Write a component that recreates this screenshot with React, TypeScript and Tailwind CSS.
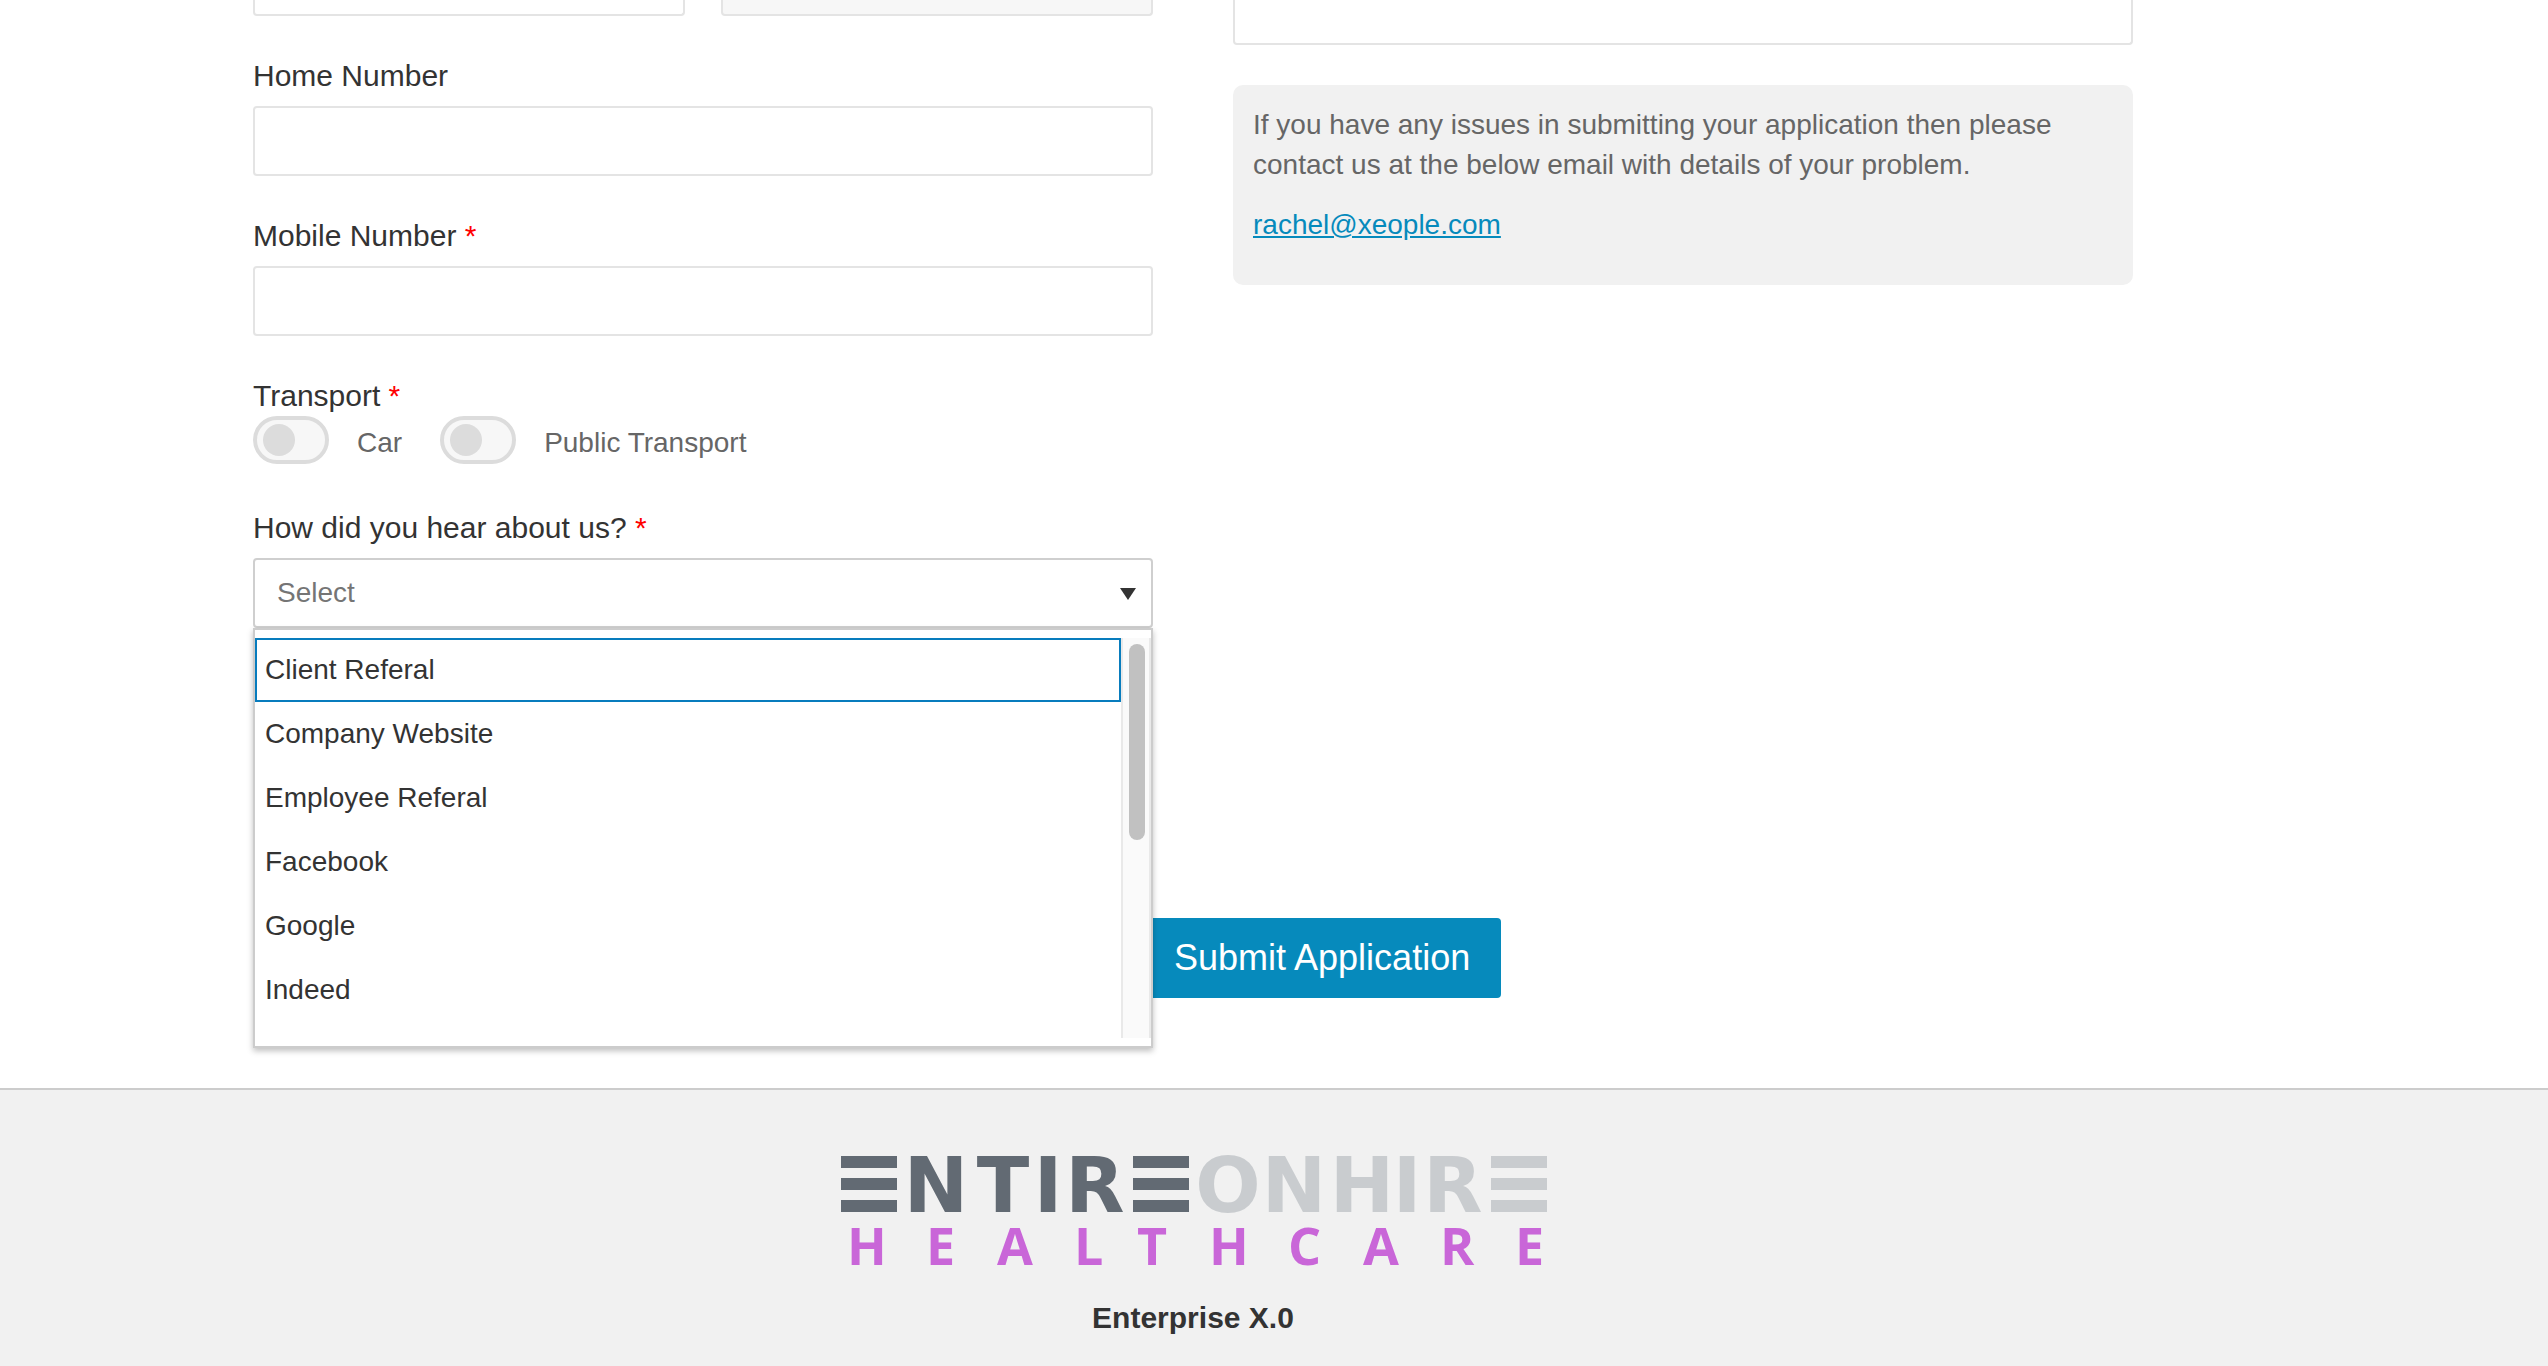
import React from 'react';

const FIELD = 'block w-full rounded border-2 border-[#e4e4e4] bg-white px-5 text-[28px] outline-none';

const SOURCES = ['Client Referal', 'Company Website', 'Employee Referal', 'Facebook', 'Google', 'Indeed'];

function FieldLabel({ htmlFor, required, children }: { htmlFor: string; required?: boolean; children: React.ReactNode }) {
  return (
    <label htmlFor={htmlFor} className="block text-[30px] leading-10 text-[#333]">
      {children}
      {required && <span className="text-[#f00]"> *</span>}
    </label>
  );
}

function Toggle({ id, label }: { id: string; label: string }) {
  return (
    <div className="flex items-start gap-7">
      <span className="relative block h-12 w-[76px]">
        <input
          id={id}
          type="checkbox"
          className="peer block h-12 w-[76px] appearance-none rounded-full border-4 border-[#dcdcdc] bg-[#f7f7f7] checked:bg-[#068abc]"
        />
        <span className="pointer-events-none absolute left-2.5 top-2 size-8 rounded-full bg-[#dcdcdc] peer-checked:left-8.5" />
      </span>
      <label htmlFor={id} className="text-[28px] leading-[54px] text-[#666]">
        {label}
      </label>
    </div>
  );
}

function BarLetter({ x }: { x: number }) {
  return (
    <>
      <rect x={x} y="0" width="56" height="12" />
      <rect x={x} y="22" width="56" height="12" />
      <rect x={x} y="44" width="56" height="12" />
    </>
  );
}

function Logo() {
  return (
    <svg role="img" aria-label="EntireOnHire Healthcare" width="710" height="110" viewBox="0 0 710 110" className="overflow-visible">
      <g fill="#626a73">
        <BarLetter x={3} />
        <text x="98 165 210 257" y="56" textAnchor="middle" fontFamily="DejaVu Sans, sans-serif" fontWeight="700" fontSize="77">
          NTIR
        </text>
        <BarLetter x={295} />
      </g>
      <g fill="#c9cccf">
        <text x="390 456 524 569 615" y="56" textAnchor="middle" fontFamily="DejaVu Sans, sans-serif" fontWeight="700" fontSize="77">
          ONHIR
        </text>
        <BarLetter x={653} />
      </g>
      <text
        x="9 88 159 236 299 371 450 525 602 677"
        y="109"
        fill="#c966d8"
        fontFamily="Open Sans, Noto Sans, sans-serif"
        fontWeight="700"
        fontSize="52"
      >
        HEALTHCARE
      </text>
    </svg>
  );
}

function SourcePicker() {
  return (
    <div className="relative mt-2.5">
      <select
        id="source"
        className="block h-[70px] w-full appearance-none rounded border-2 border-[#cfcfcf] bg-white pl-[22px] text-[28px] text-[#757575] outline-none"
      >
        <option>Select</option>
      </select>
      <svg width="16" height="12" viewBox="0 0 16 12" className="pointer-events-none absolute right-[17px] top-[30px]">
        <path d="M0 0H16L8 12Z" fill="#333" />
      </svg>
      <div className="absolute inset-x-0 top-full z-10 flex border-2 border-[#ccc] bg-white py-2 shadow-[0_3px_6px_rgba(0,0,0,0.25)]">
        <ul role="listbox" aria-label="How did you hear about us?" className="h-[400px] flex-1 overflow-hidden">
          {SOURCES.map((source, i) => (
            <li
              key={source}
              role="option"
              aria-selected={i === 0}
              className="border-2 border-transparent px-2 text-[28px] leading-[60px] text-[#333] aria-selected:border-[#087cbd]"
            >
              {source}
            </li>
          ))}
        </ul>
        <div className="h-[400px] w-[30px] border-x-2 border-[#e9e9e9] bg-[#fafafa] px-1.5 py-1.5">
          <div className="h-[196px] w-4 rounded-full bg-[#c1c1c1]" />
        </div>
      </div>
    </div>
  );
}

export default function App() {
  return (
    <div className="flex min-h-screen flex-col bg-white font-['Liberation_Sans',Arial,sans-serif]">
      <main className="pr-[162px]">
        <form className="mx-auto max-w-[1880px]" onSubmit={(e) => e.preventDefault()}>
          <div className="grid grid-cols-2 items-start gap-20">
            <div className="flex flex-col gap-10">
              <div className="grid grid-cols-2 gap-9">
                <input aria-label="State" className="h-4 w-full rounded-b border-2 border-t-0 border-[#e4e4e4] bg-white outline-none" />
                <input aria-label="Country" readOnly className="h-4 w-full rounded-b border-2 border-t-0 border-[#e4e4e4] bg-[#f7f7f7] outline-none" />
              </div>
              <div>
                <FieldLabel htmlFor="home">Home Number</FieldLabel>
                <input id="home" type="tel" className={`${FIELD} mt-2.5 h-[70px]`} />
              </div>
              <div>
                <FieldLabel htmlFor="mobile" required>Mobile Number</FieldLabel>
                <input id="mobile" type="tel" className={`${FIELD} mt-2.5 h-[70px]`} />
              </div>
              <fieldset>
                <legend className="block text-[30px] leading-10 text-[#333]">
                  Transport<span className="text-[#f00]"> *</span>
                </legend>
                <div className="flex h-[52px] gap-[38px]">
                  <Toggle id="car" label="Car" />
                  <Toggle id="public" label="Public Transport" />
                </div>
              </fieldset>
              <div>
                <FieldLabel htmlFor="source" required>How did you hear about us?</FieldLabel>
                <SourcePicker />
              </div>
            </div>
            <div className="flex flex-col gap-10">
              <textarea aria-label="Comments" className="block h-[45px] w-full resize-none rounded-b border-2 border-t-0 border-[#e4e4e4] bg-white outline-none" />
              <div className="rounded-[10px] bg-[#f1f1f1] p-5 text-[28px] leading-10 text-[#666]">
                <p className="mb-5">
                  If you have any issues in submitting your application then please contact us at the below email with details of your problem.
                </p>
                <p className="mb-5">
                  <a href="mailto:rachel@xeople.com" className="text-[#068abc] underline">rachel@xeople.com</a>
                </p>
              </div>
            </div>
          </div>
          <div className="mt-[290px] pb-[90px] pl-[890px]">
            <button type="submit" className="block h-20 rounded bg-[#068abc] px-[31px] text-4xl text-white">
              Submit Application
            </button>
          </div>
        </form>
      </main>
      <footer className="flex flex-1 flex-col items-center border-t-2 border-[#ccc] bg-[#f1f1f1] pb-7 pr-[162px] pt-[66px]">
        <Logo />
        <p className="mt-8 text-[30px] font-bold leading-10 text-[#333]">Enterprise X.0</p>
      </footer>
    </div>
  );
}
